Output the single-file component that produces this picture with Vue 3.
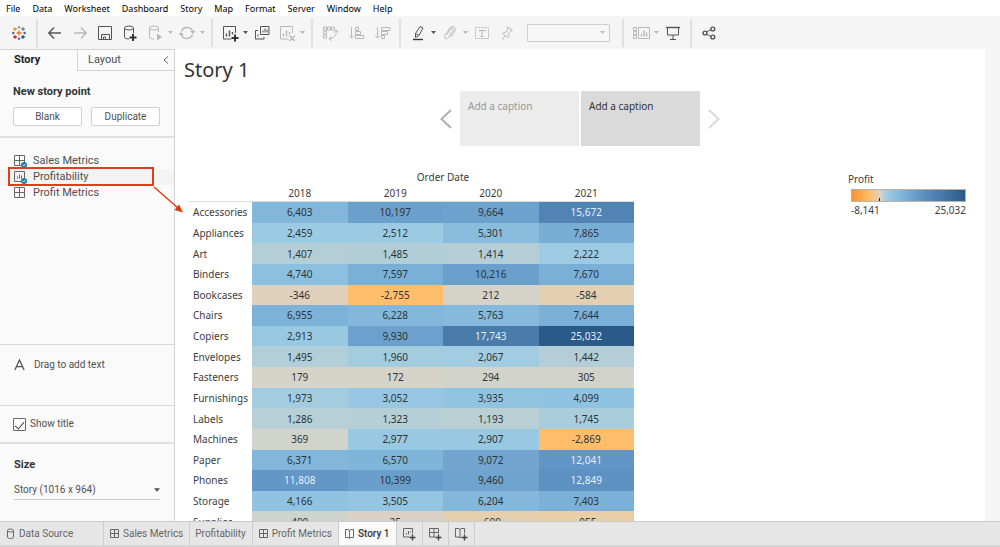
<script setup>
import { ref } from 'vue'

const menus = ['File', 'Data', 'Worksheet', 'Dashboard', 'Story', 'Map', 'Format', 'Server', 'Window', 'Help']

const showTitle = ref(true)
const years = ['2018', '2019', '2020', '2021']
const rows = [
  ['Accessories', 6403, 10197, 9664, 15672],
  ['Appliances', 2459, 2512, 5301, 7865],
  ['Art', 1407, 1485, 1414, 2222],
  ['Binders', 4740, 7597, 10216, 7670],
  ['Bookcases', -346, -2755, 212, -584],
  ['Chairs', 6955, 6228, 5763, 7644],
  ['Copiers', 2913, 9930, 17743, 25032],
  ['Envelopes', 1495, 1960, 2067, 1442],
  ['Fasteners', 179, 172, 294, 305],
  ['Furnishings', 1973, 3052, 3935, 4099],
  ['Labels', 1286, 1323, 1193, 1745],
  ['Machines', 369, 2977, 2907, -2869],
  ['Paper', 6371, 6570, 9072, 12041],
  ['Phones', 11808, 10399, 9460, 12849],
  ['Storage', 4166, 3505, 6204, 7403],
  ['Supplies', 490, 25, -699, -955],
]

// Diverging orange-blue ramp: [profit, r, g, b]
const stops = [
  [-8141, 252, 145, 48],
  [-2755, 255, 190, 106],
  [-955, 234, 206, 166],
  [-346, 224, 208, 188],
  [25, 218, 210, 198],
  [300, 210, 212, 203],
  [1250, 184, 207, 213],
  [2222, 157, 203, 227],
  [4740, 140, 192, 224],
  [7600, 122, 175, 215],
  [10200, 107, 159, 204],
  [12849, 92, 145, 194],
  [17743, 73, 123, 171],
  [25032, 42, 90, 138],
]

function shade(v) {
  const i = Math.max(1, stops.findIndex((s) => v <= s[0]))
  const a = stops[i - 1]
  const b = stops[i]
  const t = (v - a[0]) / (b[0] - a[0])
  const c = [1, 2, 3].map((k) => Math.round(a[k] + (b[k] - a[k]) * t))
  return `rgb(${c.join(',')})`
}
const fmt = (v) => v.toLocaleString('en-US')
</script>

<template>
  <div class="app">
    <nav class="menu" aria-label="Main menu">
      <button v-for="m in menus" :key="m" type="button">{{ m }}</button>
    </nav>

    <div class="toolbar" role="toolbar" aria-label="Toolbar">
      <div class="group brand">
        <button class="tool" type="button" aria-label="Start page">
          <svg viewBox="0 0 18 18">
            <g fill="none" stroke-width="1.3">
              <path stroke="#e8762c" d="M9 6.5v5M6.5 9h5" />
              <path stroke="#eb912c" d="M5 3.2v3.6M3.2 5h3.6" />
              <path stroke="#59879b" d="M13 3.2v3.6M11.2 5h3.6" />
              <path stroke="#c72035" d="M5 11.2v3.6M3.2 13h3.6" />
              <path stroke="#1f457e" d="M13 11.2v3.6M11.2 13h3.6" />
              <path stroke="#7099a6" d="M9 2v2.6M7.7 3.3h2.6" />
              <path stroke="#5b6591" d="M9 13.4V16M7.7 14.7h2.6M2 9h2.6M3.3 7.7v2.6M13.4 9H16M14.7 7.7v2.6" />
            </g>
          </svg>
        </button>
      </div>

      <div class="group">
        <button class="tool" type="button" aria-label="Undo"><svg viewBox="0 0 18 18"><path class="l w" d="M3 9h12M8 3.5L2.8 9 8 14.5" /></svg></button>
        <button class="tool dim" type="button" aria-label="Redo"><svg viewBox="0 0 18 18"><path class="l w" d="M3 9h12M10 3.5L15.2 9 10 14.5" /></svg></button>
        <button class="tool" type="button" aria-label="Save"><svg viewBox="0 0 18 18"><path class="l" d="M2.5 2.5h13v13h-13zM5.5 15.5v-5h8v5M7.5 15.5v-2.5h2v2.5" /></svg></button>
        <button class="tool" type="button" aria-label="New data source"><svg viewBox="0 0 18 18"><ellipse class="l" cx="8" cy="4" rx="4.5" ry="2" /><path class="l" d="M3.5 4v9c0 1 2 2 4.5 2M12.500 4v5" /><path class="l b" d="M12 10v7M8.500 13.500h7" /></svg></button>
        <button class="tool dim" type="button" aria-label="Pause auto updates"><svg viewBox="0 0 18 18"><ellipse class="l" cx="8" cy="4" rx="4.500" ry="2" /><path class="l" d="M3.500 4v9c0 1 2 2 4.500 2M12.500 4v4" /><path class="f" d="M11 9.500l5 3.500-5 3.500z" /></svg></button>
        <button class="caret dim" type="button" aria-label="Update options"><svg viewBox="0 0 5 3"><path d="M0 0h5L2.500 3z" /></svg></button>
        <button class="tool dim" type="button" aria-label="Refresh"><svg viewBox="0 0 18 18"><path class="l w" d="M3.500 7.500C5 2.500 12.500 2 14.500 7M14.500 10.500C13 15.500 5.500 16 3.500 11" /><path class="f" d="M12 7h5.500L15 10zM.5 11h5.500L3 8z" /></svg></button>
        <button class="caret dim" type="button" aria-label="Refresh options"><svg viewBox="0 0 5 3"><path d="M0 0h5L2.500 3z" /></svg></button>
      </div>

      <div class="group">
        <button class="tool" type="button" aria-label="New worksheet"><svg viewBox="0 0 18 18"><path class="l" d="M14.500 9V2.500h-12v12.500h8" /><path class="l w" d="M5.500 12.500V9.500M8.500 12.500V6.500M11.500 10.500V8" /><path class="l b" d="M14 10.500v7M10.500 14h7" /></svg></button>
        <button class="caret" type="button" aria-label="New sheet options"><svg viewBox="0 0 5 3"><path d="M0 0h5L2.500 3z" /></svg></button>
        <button class="tool" type="button" aria-label="Duplicate"><svg viewBox="0 0 18 18"><path class="l" d="M7.500 2.500h8.500v8h-8.500zM5 6.500H2.500v8.500h8.500v-2M10 8.500V6.500M12 8.500v-4M14 8.500v-3M5 12.500v-2" /></svg></button>
        <button class="tool dim" type="button" aria-label="Clear sheet"><svg viewBox="0 0 18 18"><path class="l" d="M14.500 9V2.500h-12v12.500h8" /><path class="l w" d="M5.500 12.500V9.500M8.500 12.500V6.500M11.500 10.500V8M11.500 11.500l5.500 5.500M17 11.500l-5.500 5.500" /></svg></button>
        <button class="caret dim" type="button" aria-label="Clear options"><svg viewBox="0 0 5 3"><path d="M0 0h5L2.500 3z" /></svg></button>
      </div>

      <div class="group sorts">
        <button class="tool dim" type="button" aria-label="Swap rows and columns"><svg viewBox="0 0 18 18"><path class="l" d="M2.500 3h3v3h-3zM6.500 3h3v3h-3zM10.500 3h3v3h-3zM2.500 7h3v3h-3zM2.500 11h3v3h-3zM15 6.500c1 4-2 8-7 8.500M13 8.500l2-2.500 2.500 2M10.500 12.500L8 15l2.500 2" /></svg></button>
        <button class="tool dim" type="button" aria-label="Sort ascending"><svg viewBox="0 0 18 18"><path class="l" d="M4.500 3v11M2 11.500L4.500 14 7 11.500M8.500 3.500h3v3h-3zM8.500 7.500h5v3h-5zM8.500 11.500h8v3h-8z" /></svg></button>
        <button class="tool dim" type="button" aria-label="Sort descending"><svg viewBox="0 0 18 18"><path class="l" d="M4.500 3v11M2 11.500L4.500 14 7 11.500M8.500 3.500H17v3H8.500zM8.500 7.500h6v3h-6zM8.500 11.500h3v3h-3z" /></svg></button>
      </div>

      <div class="group">
        <button class="tool" type="button" aria-label="Highlight"><svg viewBox="0 0 18 18"><path class="l" d="M6.500 9.500L11 2.500l3 1.500-4 7.500-3.500 2zM6.500 9.500l3.500 2" /><path class="l u" d="M4 15.500h10" /></svg></button>
        <button class="caret" type="button" aria-label="Highlight options"><svg viewBox="0 0 5 3"><path d="M0 0h5L2.500 3z" /></svg></button>
        <button class="tool dim" type="button" aria-label="Group members"><svg viewBox="0 0 18 18"><path class="l" d="M6 10.500L9.500 5c1.200-1.800 3.600-.4 2.500 1.500L7.500 13.500c-1.800 2.800-5.200.8-3.500-2L9 4c2-3.200 6.800-.6 4.800 3L10 13" /></svg></button>
        <button class="caret dim" type="button" aria-label="Group options"><svg viewBox="0 0 5 3"><path d="M0 0h5L2.500 3z" /></svg></button>
        <button class="tool dim" type="button" aria-label="Show mark labels"><svg viewBox="0 0 18 18"><path class="l" stroke-dasharray="2 1" d="M2.500 3.500h13v11h-13z" /><path class="l" d="M6 7.500V6.500h6v1M9 6.500v6M7.500 12.500h3" /></svg></button>
        <button class="tool dim" type="button" aria-label="Fix axes"><svg viewBox="0 0 18 18"><path class="l" d="M9.500 3l5 3-1 1-1-.3-2 3.300.5 2.500-1 1L4.500 9.500l1-1 2.500-.3 2-3.200-.8-1zM7.300 11.500L4.500 15.500" /></svg></button>
        <span class="fit"><select aria-label="Fit" disabled><option></option></select><svg viewBox="0 0 5 3"><path d="M0 0h5L2.500 3z" /></svg></span>
      </div>

      <div class="group">
        <button class="tool dim" type="button" aria-label="Show cards"><svg viewBox="0 0 18 18"><path class="l" d="M6.500 3.500h11v11h-11zM1.500 3.500h3v3h-3zM1.500 7.500h3v3h-3zM1.500 11.500h3v3h-3z" /><path class="l w" d="M9.500 12.500v-2.500M12 12.500V6.500M14.500 12.500V8.500" /></svg></button>
        <button class="caret dim" type="button" aria-label="Card options"><svg viewBox="0 0 5 3"><path d="M0 0h5L2.500 3z" /></svg></button>
        <button class="tool" type="button" aria-label="Presentation mode"><svg viewBox="0 0 18 18"><path class="l w" d="M2 3.500h14" /><path class="l" d="M3.500 3.500v7.500h11V3.500M9 11v4M6 15.500h6" /></svg></button>
      </div>

      <div class="group last">
        <button class="tool" type="button" aria-label="Share"><svg viewBox="0 0 18 18"><path class="l" d="M6.500 8L11 5.500M6.500 10L11 12.500" /><circle class="l w" cx="5" cy="9" r="1.900" /><circle class="l w" cx="12.800" cy="5" r="1.900" /><circle class="l w" cx="12.800" cy="13" r="1.900" /></svg></button>
      </div>
    </div>

    <div class="body">
      <aside class="side">
        <div class="tabs">
          <button class="tab on" type="button">Story</button>
          <button class="tab" type="button">Layout</button>
          <button class="collapse" type="button" aria-label="Collapse pane"><svg viewBox="0 0 6 8"><path d="M5 .5L1 4l4 3.500" /></svg></button>
        </div>

        <section class="points">
          <h2>New story point</h2>
          <div class="pair">
            <button type="button">Blank</button>
            <button type="button">Duplicate</button>
          </div>
        </section>

        <ul class="sheets">
          <li>
            <svg viewBox="0 0 14 14"><path class="s" d="M1.500 1.500h10v10h-10zM6.500 1.500v10M1.500 6.500h10" /><circle cx="11" cy="11" r="3" fill="#1f7fa8" /><path d="M9.700 11l1 1 1.600-2" fill="none" stroke="#fff" stroke-width=".8" /></svg>
            <span>Sales Metrics</span>
          </li>
          <li class="active">
            <svg viewBox="0 0 14 14"><path class="s" d="M1.500 1.500h10v10h-10zM4.500 8.500V6.500M6.500 8.500v-4M8.500 8.500V5.500" /><circle cx="11" cy="11" r="3" fill="#1f7fa8" /><path d="M9.700 11l1 1 1.600-2" fill="none" stroke="#fff" stroke-width=".8" /></svg>
            <span>Profitability</span>
            <div class="mark" aria-hidden="true">
              <svg viewBox="0 0 32 28"><path d="M1 1l24 21" stroke="#d9380f" stroke-width="1.300" /><path d="M30 26.500l-8.500-2.500 4.500-5.500z" fill="#d9380f" /></svg>
            </div>
          </li>
          <li>
            <svg viewBox="0 0 14 14"><path class="s" d="M1.500 1.500h10v10h-10zM6.500 1.500v10M1.500 6.500h10" /></svg>
            <span>Profit Metrics</span>
          </li>
        </ul>

        <section class="drag">
          <svg viewBox="0 0 10 10"><path d="M.8 9.500L5 .5l4.200 9M2.300 6.500h5.400" /></svg>
          <span>Drag to add text</span>
        </section>

        <section class="title-toggle">
          <label><input v-model="showTitle" type="checkbox"><span>Show title</span></label>
        </section>

        <section class="size">
          <h2><label for="size">Size</label></h2>
          <div class="drop">
            <select id="size"><option>Story (1016 x 964)</option></select>
            <svg viewBox="0 0 5 3"><path d="M0 0h5L2.500 3z" /></svg>
          </div>
        </section>
      </aside>

      <main class="canvas">
        <h1 v-if="showTitle">Story 1</h1>
        <div class="navigator">
          <button class="arrow" type="button" aria-label="Previous"><svg viewBox="0 0 12 20"><path d="M11 1L1.500 10 11 19" /></svg></button>
          <div class="captions">
            <button class="caption" type="button">Add a caption</button>
            <button class="caption on" type="button">Add a caption</button>
          </div>
          <button class="arrow off" type="button" aria-label="Next"><svg viewBox="0 0 12 20"><path d="M1 1l9.500 9L1 19" /></svg></button>
        </div>

        <div class="viz">
          <table>
            <colgroup><col class="label-col"><col v-for="y in years" :key="y"></colgroup>
            <thead>
              <tr><td></td><th colspan="4" scope="colgroup">Order Date</th></tr>
              <tr class="years"><td></td><th v-for="y in years" :key="y" scope="col">{{ y }}</th></tr>
            </thead>
            <tbody>
              <tr v-for="[name, ...vals] in rows" :key="name">
                <th scope="row">{{ name }}</th>
                <td v-for="(v, i) in vals" :key="i" :class="{ light: v > 11000 }" :style="{ background: shade(v) }">{{ fmt(v) }}</td>
              </tr>
            </tbody>
          </table>

          <div class="legend">
            <h3>Profit</h3>
            <div class="ramp"><i></i></div>
            <div class="range"><span>-8,141</span><span>25,032</span></div>
          </div>
        </div>
      </main>
    </div>

    <nav class="sheetbar" aria-label="Sheets">
      <button class="source" type="button"><svg viewBox="0 0 12 12"><ellipse class="s" cx="5.500" cy="2.500" rx="3" ry="1.500" /><path class="s" d="M2.500 2.500v6.500c0 2 6 2 6 0V2.500" /></svg>Data Source</button>
      <button type="button"><svg viewBox="0 0 12 12"><path class="s" d="M1.500 1.500h8v8h-8zM5.500 1.500v8M1.500 5.500h8" /></svg>Sales Metrics</button>
      <button type="button">Profitability</button>
      <button type="button"><svg viewBox="0 0 12 12"><path class="s" d="M1.500 1.500h8v8h-8zM5.500 1.500v8M1.500 5.500h8" /></svg>Profit Metrics</button>
      <button class="on" type="button"><svg viewBox="0 0 12 12"><path class="s" d="M5.500 3v7.500M5.500 3L4.500 1.500h-3v8h3l1 1 1-1h3v-8h-3z" /></svg>Story 1</button>
      <button class="add" type="button" aria-label="New worksheet"><svg viewBox="0 0 14 14"><path class="s" d="M10.500 6.500v-5h-9v8.500h6M4.500 7.500V6M6.500 7.500V4M8.500 5.500v-1" /><path class="s p" d="M10.500 7.500v6M7.500 10.500h6" /></svg></button>
      <button class="add" type="button" aria-label="New dashboard"><svg viewBox="0 0 14 14"><path class="s" d="M10.500 6.500v-5h-9v8.500h6M6 1.500v8.500M1.500 5.500h9" /><path class="s p" d="M10.500 7.500v6M7.500 10.500h6" /></svg></button>
      <button class="add" type="button" aria-label="New story"><svg viewBox="0 0 14 14"><path class="s" d="M6 3v8M6 3L5 1.500H1.500v8.500H5l1 1 1-1M6 3l1-1.500h3.500v5" /><path class="s p" d="M10.500 7.500v6M7.500 10.500h6" /></svg></button>
    </nav>
  </div>
</template>

<style>
body {
  margin: 0;
}
</style>

<style scoped>
* {
  box-sizing: border-box;
}
.app {
  display: flex;
  flex-direction: column;
  height: 100vh;
  background: #fff;
  color: #505050;
  font: 11px/16px Roboto, "Liberation Sans", sans-serif;
}
button {
  padding: 0;
  border: 0;
  background: none;
  color: inherit;
  font: inherit;
}
h1, h2, h3, ul {
  margin: 0;
  padding: 0;
}
svg {
  display: block;
  flex: none;
}

.menu {
  display: flex;
  flex: none;
  gap: 12px;
  height: 16px;
  padding: 2px 6px 0;
  align-items: center;
}
.menu button {
  color: #000;
  font: 9px/14px "Noto Sans", "Open Sans", sans-serif;
}

.toolbar {
  display: flex;
  flex: none;
  align-items: center;
  height: 33px;
  background: #f5f5f5;
  color: #555;
}
.group {
  display: flex;
  align-items: center;
  height: 28px;
  padding: 0 5px 0 4px;
  border-right: 2px solid #e0e0e0;
}
.brand {
  padding: 0 5px 0 6px;
}
.sorts {
  gap: 1px;
}
.last {
  border: 0;
}
.tool {
  display: grid;
  place-items: center;
  width: 25px;
  height: 26px;
}
.tool svg {
  width: 18px;
  height: 18px;
}
.dim {
  color: #b8b8b8;
}
.l {
  fill: none;
  stroke: currentColor;
  stroke-width: 1;
}
.w {
  stroke-width: 1.4;
}
.b {
  stroke: #333;
  stroke-width: 2;
}
.u {
  stroke: #333;
  stroke-width: 1.4;
}
.f {
  fill: currentColor;
}
.caret {
  width: 7px;
}
.caret svg, .drop svg, .fit svg {
  width: 5px;
  height: 3px;
  margin: 0 auto;
  fill: currentColor;
}
.fit {
  display: grid;
  align-items: center;
  margin: 0 7px 0 8px;
  color: #c0c0c0;
}
.fit select, .fit svg {
  grid-area: 1 / 1;
}
.fit svg {
  z-index: 1;
  margin: 0 5px 0 auto;
}
.fit select {
  width: 83px;
  height: 18px;
  border: 1px solid #cfcfcf;
  border-radius: 1px;
  background: #f7f7f7;
  opacity: 1;
  appearance: none;
}

.body {
  display: flex;
  flex: 1;
  min-height: 0;
}
.side {
  display: flex;
  flex: none;
  flex-direction: column;
  width: 175px;
  border-right: 1px solid #d4d4d4;
  background: #fafafa;
}
.tabs {
  display: flex;
  flex: none;
  height: 22px;
  border-top: 1px solid #d4d4d4;
}
.tab {
  flex: 1;
  padding-left: 10px;
  border-bottom: 1px solid #d4d4d4;
  border-left: 1px solid #d4d4d4;
  text-align: left;
}
.tab.on {
  flex: none;
  width: 77px;
  padding-left: 13px;
  border-color: transparent;
  color: #222;
  font-weight: 700;
}
.collapse {
  width: 16px;
  border-bottom: 1px solid #d4d4d4;
}
.collapse svg {
  width: 6px;
  height: 8px;
  margin: 0 auto;
}
.collapse path {
  fill: none;
  stroke: #666;
}
h2 {
  color: #333;
  font-size: 11px;
  line-height: 16px;
}
.points {
  padding: 13px 14px 10px 13px;
  border-bottom: 2px solid #e0e0e0;
}
.pair {
  display: flex;
  gap: 9px;
  margin-top: 7px;
}
.pair button {
  flex: 1;
  height: 19px;
  border: 1px solid #d0d0d0;
  border-radius: 2px;
  background: #fff;
  font-size: 10px;
}
.sheets {
  flex: 1;
  padding-top: 15px;
  list-style: none;
}
.sheets li {
  position: relative;
  display: flex;
  align-items: center;
  gap: 6px;
  height: 16px;
  padding-left: 13px;
}
.sheets li > svg {
  width: 14px;
  height: 14px;
}
.sheets .active {
  z-index: 1;
  background: #f3f3f3;
}
.s {
  fill: none;
  stroke: #666;
}
.mark {
  position: absolute;
  top: -2px;
  left: 8px;
  width: 146px;
  height: 19px;
  border: 2px solid #dd3f1c;
}
.mark svg {
  position: absolute;
  top: 17px;
  left: 143px;
  width: 32px;
  height: 28px;
}
.drag {
  display: flex;
  align-items: flex-start;
  gap: 9px;
  height: 61px;
  padding: 12px 14px;
  border-top: 1px solid #d8d8d8;
  font-size: 10px;
}
.drag svg {
  width: 11px;
  height: 16px;
}
.drag path {
  fill: none;
  stroke: #555;
  stroke-width: 1.2;
}
.title-toggle {
  padding: 10px 13px;
  border-top: 1px solid #d8d8d8;
  font-size: 10px;
}
.title-toggle label {
  display: flex;
  align-items: center;
  gap: 4px;
}
.title-toggle input {
  display: grid;
  place-items: center;
  width: 13px;
  height: 13px;
  margin: 0;
  border: 1px solid #666;
  border-radius: 1px;
  background: #fff;
  appearance: none;
}
.title-toggle input:checked::after {
  content: "";
  width: 4px;
  height: 8px;
  border: solid #444;
  border-width: 0 1px 1px 0;
  transform: rotate(40deg);
}
.size {
  padding: 13px 14px 21px;
  border-top: 2px solid #e0e0e0;
}
.drop {
  display: grid;
  align-items: center;
  margin-top: 8px;
  border-bottom: 1px solid #c8c8c8;
}
.drop select, .drop svg {
  grid-area: 1 / 1;
}
.drop svg {
  width: 6px;
  height: 4px;
  margin: 0 0 0 auto;
}
.drop select {
  width: 100%;
  height: 18px;
  padding: 0;
  border: 0;
  background: none;
  color: inherit;
  font: inherit;
  font-size: 10px;
  appearance: none;
}

.canvas {
  display: flex;
  flex: 1;
  flex-direction: column;
  min-width: 0;
  overflow: hidden;
  border-right: 15px solid #f5f5f5;
}
h1 {
  padding: 8px 9px 9px;
  color: #333;
  font: 400 20px/25px "Noto Sans", "Open Sans", sans-serif;
}
.navigator {
  display: flex;
  flex: none;
  justify-content: center;
  align-items: center;
  gap: 8px;
}
.captions {
  display: flex;
  gap: 2px;
}
.caption {
  display: flex;
  width: 119px;
  height: 55px;
  padding: 7px 8px;
  background: #ececec;
  color: #999;
  text-align: left;
  font: 10px/16px "Noto Sans", "Open Sans", sans-serif;
}
.caption.on {
  background: #dadada;
  color: #333;
}
.arrow svg {
  width: 12px;
  height: 20px;
}
.arrow path {
  fill: none;
  stroke: #b0b0b0;
  stroke-width: 2;
}
.arrow.off path {
  stroke: #dadada;
}

.viz {
  display: flex;
  align-items: flex-start;
  justify-content: space-between;
  padding: 23px 19px 0 13px;
  color: #3c3c3c;
  font: 10px/16px "Noto Sans", "Open Sans", sans-serif;
}
table {
  flex: none;
  width: 446px;
  height: 363px;
  border-collapse: separate;
  border-spacing: 0;
  table-layout: fixed;
}
.label-col {
  width: 64px;
}
th, td {
  padding: 0;
  text-align: center;
  font-weight: 400;
  line-height: 16px;
}
thead tr {
  height: 16px;
}
.years > * {
  border-bottom: 1px solid #ddd;
}
tbody th {
  padding-left: 5px;
  text-align: left;
}
tbody td {
  color: #2c3438;
}
tbody .light {
  color: #e6eff7;
}
.legend {
  width: 118px;
  padding-top: 2px;
}
h3 {
  font: inherit;
}
.ramp {
  display: flex;
  align-items: flex-end;
  height: 13px;
  margin-top: 2px;
  margin-left: 3px;
  border: 1px solid #b9b4aa;
  background: linear-gradient(90deg, #fc9130, #ffbe6a 16%, #dad2c6 25%, #9dcbe3 31%, #7aafd7 47%, #5c91c2 63%, #497bab 78%, #2a5a8a);
}
.ramp i {
  width: 1px;
  height: 3px;
  margin-left: 24%;
  background: #222;
}
.range {
  display: flex;
  justify-content: space-between;
  margin-left: 3px;
}

.sheetbar {
  display: flex;
  flex: none;
  height: 26px;
  border-top: 1px solid #ccc;
  border-bottom: 2px solid #d6d6d6;
  background: #e6e6e6;
}
.sheetbar button {
  display: flex;
  align-items: center;
  gap: 2px;
  padding: 0 6px 0 5px;
  border-right: 1px solid #cdcdcd;
  color: #666;
  font-size: 10px;
}
.sheetbar svg {
  width: 12px;
  height: 12px;
}
.sheetbar .source {
  width: 104px;
}
.sheetbar .on {
  background: #fafafa;
  color: #333;
  font-weight: 500;
}
.sheetbar .add svg {
  width: 14px;
  height: 14px;
}
.p {
  stroke: #444;
  stroke-width: 1.4;
}
</style>
